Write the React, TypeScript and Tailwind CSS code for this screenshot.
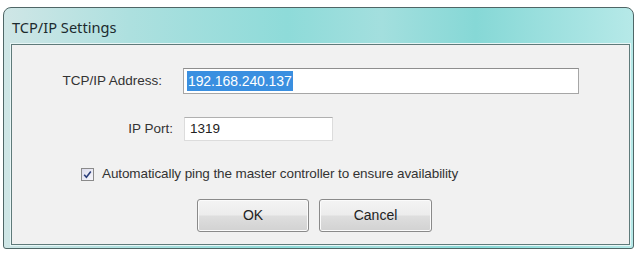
import React from "react";

export default function App() {
  return (
    <div className="w-[639px] h-[254px] bg-white overflow-hidden" style={{ fontFamily: '"Liberation Sans", Arial, sans-serif' }}>
      <div className="ml-[3px] mt-[7px] w-[631px] h-[242px] rounded-t-[8px] rounded-b-[3px] border border-[#4f6666] bg-[linear-gradient(90deg,#cfe6e6_0%,#ade0df_20%,#8edbd9_45%,#a3dfde_60%,#86d8d6_75%,#b6e9e8_100%)] flex flex-col">
        <div className="h-[36px] shrink-0 flex items-center pl-[8px] pt-[3px]">
          <span className="text-[14.6px] text-[#1c2a2e]" style={{ fontFamily: '"Noto Sans", "Open Sans", sans-serif' }}>TCP/IP Settings</span>
        </div>
        <div className="ml-[7px] mr-[3px] mb-[3px] flex-1 border border-[#5f7a7a] bg-[#f1f1f1] shadow-[0_0_0_1px_#e8f6f6] flex flex-col">
          <div className="flex items-center mt-[23px] h-[26px]">
            <div className="w-[160px] text-right pr-[10px] text-[13.5px] text-[#333]">TCP/IP Address:</div>
            <div className="ml-[11px] w-[396px] h-[26px] bg-white border border-[#a6a6a6] border-t-[#8e8e8e] flex items-center pl-[3px]">
              <span className="bg-[#3a8fe0] text-white text-[14px] leading-[20px] px-[1px] tracking-[-0.1px]">192.168.240.137</span>
            </div>
          </div>
          <div className="flex items-center mt-[23px] h-[24px]">
            <div className="w-[161px] text-right text-[13.5px] text-[#333]">IP Port:</div>
            <div className="ml-[11px] w-[149px] h-[24px] bg-white border border-[#dcdcdc] border-t-[#b0b0b0] flex items-center pl-[5px]">
              <span className="text-[13.5px] text-[#222]">1319</span>
            </div>
          </div>
          <div className="flex items-center mt-[25px] h-[16px] pl-[69px]">
            <div className="w-[13px] h-[13px] border border-[#8a8a8a] bg-[linear-gradient(135deg,#dcdcec,#f6f6fb)] flex items-center justify-center">
              <svg width="9" height="9" viewBox="0 0 9 9">
                <path d="M1.2 4.8 L3.4 7.2 L7.8 1.4" fill="none" stroke="#2a3d7a" strokeWidth="1.6" />
              </svg>
            </div>
            <span className="ml-[8px] text-[13.5px] text-[#333] tracking-[-0.1px]">Automatically ping the master controller to ensure availability</span>
          </div>
          <div className="flex mt-[17px] pl-[185px] gap-[10px]">
            <button className="w-[112px] h-[33px] rounded-[3px] border border-[#8a8a8a] bg-[linear-gradient(180deg,#f4f4f4_0%,#ececec_48%,#dedede_52%,#d2d2d2_100%)] shadow-[inset_0_0_0_1px_#fbfbfb] text-[14px] text-[#222]">OK</button>
            <button className="w-[113px] h-[33px] rounded-[3px] border border-[#8a8a8a] bg-[linear-gradient(180deg,#f4f4f4_0%,#ececec_48%,#dedede_52%,#d2d2d2_100%)] shadow-[inset_0_0_0_1px_#fbfbfb] text-[14px] text-[#222]">Cancel</button>
          </div>
        </div>
      </div>
    </div>
  );
}
